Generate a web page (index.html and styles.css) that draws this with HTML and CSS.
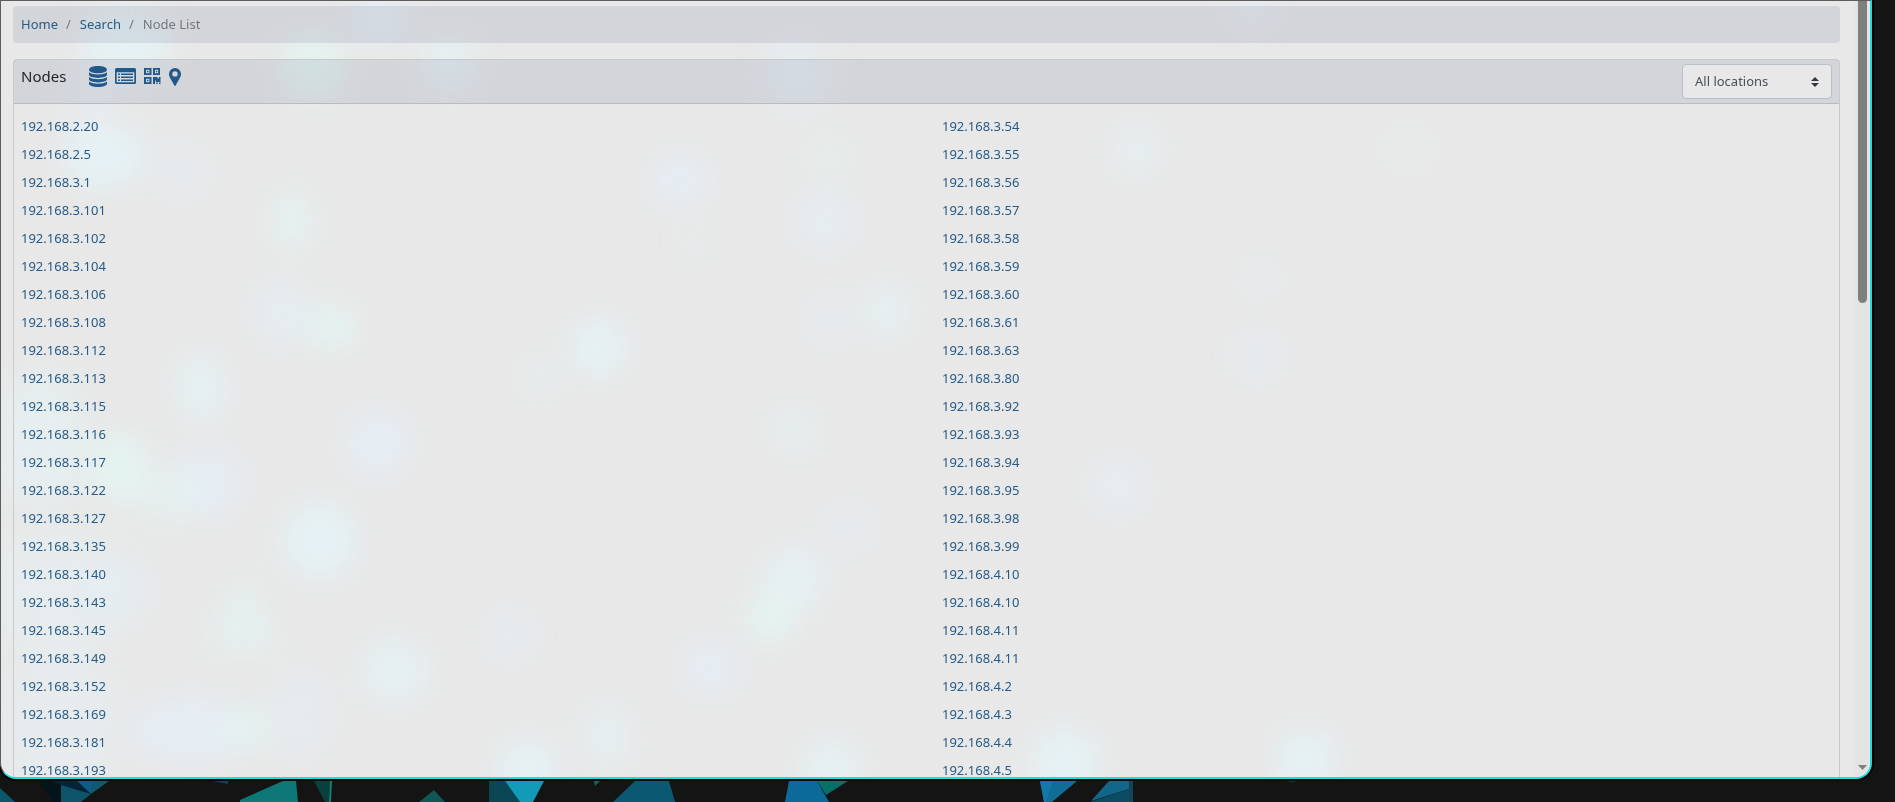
FILE: index.html
```html
<!DOCTYPE html>
<html lang="en">
<head>
<meta charset="utf-8">
<title>Node List</title>
<link rel="stylesheet" href="styles.css">
</head>
<body>
<div class="desktop">
  <div class="window">
    <svg class="glow" viewBox="0 0 1870 777" preserveAspectRatio="none" aria-hidden="true">
      <defs>
        <filter id="soft" x="-5%" y="-5%" width="110%" height="110%" color-interpolation-filters="sRGB"><feGaussianBlur stdDeviation="14"/></filter>
      </defs>
      <g filter="url(#soft)">
        <g fill="#e5f1f4">
          <ellipse cx="124" cy="40" rx="46" ry="36"/><ellipse cx="103" cy="155" rx="42" ry="34"/>
          <circle cx="448" cy="63" r="30" opacity=".8"/><circle cx="597" cy="347" r="29"/>
          <ellipse cx="886" cy="310" rx="22" ry="28" opacity=".8"/><ellipse cx="200" cy="387" rx="26" ry="36" opacity=".8"/>
          <circle cx="539" cy="378" r="20" opacity=".5"/><circle cx="318" cy="540" r="38"/>
          <circle cx="394" cy="671" r="34" opacity=".8"/><circle cx="794" cy="578" r="31" opacity=".9"/>
          <ellipse cx="606" cy="736" rx="25" ry="32" opacity=".7"/><circle cx="527" cy="768" r="31"/>
          <circle cx="830" cy="770" r="32" opacity=".8"/><circle cx="1065" cy="762" r="35"/>
          <circle cx="1305" cy="759" r="30"/><circle cx="1136" cy="149" r="25" opacity=".7"/>
          <circle cx="794" cy="430" r="24" opacity=".6"/><ellipse cx="60" cy="720" rx="60" ry="80" opacity=".4"/>
          <ellipse cx="60" cy="590" rx="80" ry="60" opacity=".5"/><ellipse cx="40" cy="440" rx="45" ry="70" opacity=".6"/>
        </g>
        <g fill="#e5edf3">
          <circle cx="379" cy="18" r="29"/><circle cx="797" cy="73" r="34" opacity=".9"/>
          <circle cx="182" cy="172" r="28" opacity=".5"/><circle cx="679" cy="180" r="27"/>
          <circle cx="824" cy="220" r="30" opacity=".8"/><circle cx="692" cy="245" r="20" opacity=".3"/>
          <ellipse cx="280" cy="312" rx="26" ry="34" opacity=".8"/><circle cx="830" cy="320" r="26" opacity=".5"/>
          <circle cx="376" cy="443" r="33"/><ellipse cx="205" cy="483" rx="36" ry="34"/>
          <circle cx="120" cy="590" r="28" opacity=".8"/><circle cx="509" cy="636" r="26" opacity=".6"/>
          <circle cx="709" cy="668" r="27"/><ellipse cx="190" cy="730" rx="60" ry="32"/>
          <ellipse cx="300" cy="715" rx="32" ry="44" opacity=".6"/><circle cx="90" cy="95" r="26" opacity=".6"/>
          <circle cx="1118" cy="486" r="27" opacity=".9"/><circle cx="1257" cy="356" r="25" opacity=".6"/>
          <circle cx="1259" cy="278" r="22" opacity=".4"/><circle cx="1251" cy="4" r="25" opacity=".7"/>
          <circle cx="848" cy="528" r="26" opacity=".5"/>
        </g>
        <g fill="#e4f3f0">
          <circle cx="312" cy="65" r="33"/><ellipse cx="291" cy="220" rx="23" ry="33" opacity=".8"/>
          <circle cx="331" cy="327" r="24"/><ellipse cx="118" cy="468" rx="31" ry="36"/>
          <ellipse cx="162" cy="500" rx="32" ry="30" opacity=".5"/><path opacity=".8" d="M242 570l40 80h-80z"/>
          <circle cx="770" cy="618" r="26"/><circle cx="248" cy="728" r="22" opacity=".8"/>
          <circle cx="828" cy="157" r="23" opacity=".5"/><circle cx="1408" cy="149" r="25" opacity=".2"/>
        </g>
      </g>
    </svg>

    <main class="content">
      <nav class="breadcrumb" aria-label="Breadcrumb">
        <ol class="crumbs">
          <li class="crumb"><a href="#home">Home</a></li>
          <li class="crumb"><a href="#search">Search</a></li>
          <li class="crumb" aria-current="page">Node List</li>
        </ol>
      </nav>

      <section class="card">
        <header class="card-header">
          <h1 class="card-title">Nodes</h1>
          <div class="tools">
            <a href="#backups" aria-label="Backups"><svg width="18" height="21" viewBox="0 0 18 21"><path d="M0 3.700C0 1.600 4 0 9 0s9 1.600 9 3.700S14 7.200 9 7.200 0 5.800 0 3.700zM0 6.300c2 1.600 5.300 2.200 9 2.200s7-.6 9-2.200v2.500c0 1.700-4 3.100-9 3.100S0 10.500 0 8.800zM0 11c2 1.600 5.300 2.200 9 2.200s7-.6 9-2.200v2.300c0 1.700-4 3.100-9 3.100S0 15 0 13.300zM0 15.500c2 1.600 5.300 2.200 9 2.200s7-.6 9-2.200v2.300C18 19.600 14 21 9 21s-9-1.400-9-3.200z"/></svg></a>
            <a href="#details" aria-label="Details"><svg width="21" height="21" viewBox="0 0 21 21"><path fill-rule="evenodd" d="M1.500 2h18A1.500 1.500 0 0 1 21 3.500v13a1.500 1.500 0 0 1-1.500 1.500h-18A1.500 1.500 0 0 1 0 16.500v-13A1.500 1.500 0 0 1 1.500 2zM1.700 6.300v10h17.600v-10z"/><path d="M3 7.500h2v1.600H3zm3 0h12v1.600H6zM3 10.500h2v1.600H3zm3 0h12v1.600H6zM3 13.500h2v1.600H3zm3 0h12v1.600H6z"/></svg></a>
            <a href="#codes" aria-label="QR codes"><svg width="17" height="21" viewBox="0 0 17 21"><path fill-rule="evenodd" d="M0 2h7.500v7H0zm2 1.800v3.400h3.500V3.800zM9 2h7v7H9zm2 1.800v3.400h3.200V3.800zM0 11h7.500v7H0zm2 1.800v3.400h3.500v-3.400z"/><path d="M3 4.800h1.500v1.500H3zm9 0h1.300v1.500H12zm-9 9h1.500v1.500H3zM9 11h4.500v1.600h1.300V11h1.700v5h-4.800v-1.500H11V18H9zm3.200 5.600h1.500V18h-1.500zm2.800 0h1.500V18H15z"/></svg></a>
            <a href="#map" aria-label="Map"><svg width="12" height="21" viewBox="0 0 12 21"><path fill-rule="evenodd" d="M6 2a6 6 0 0 0-6 6c0 2.500 1 3.600 5.300 11.500.3.600 1.100.6 1.400 0C11 11.600 12 10.500 12 8a6 6 0 0 0-6-6zm0 3.200A2.700 2.700 0 1 1 6 10.600 2.700 2.700 0 0 1 6 5.200z"/></svg></a>
          </div>
          <select class="location" aria-label="Location">
            <option>All locations</option>
          </select>
        </header>

        <div class="nodes">
          <ul class="node-list">
            <li><a href="#n">192.168.2.20</a></li>
            <li><a href="#n">192.168.2.5</a></li>
            <li><a href="#n">192.168.3.1</a></li>
            <li><a href="#n">192.168.3.101</a></li>
            <li><a href="#n">192.168.3.102</a></li>
            <li><a href="#n">192.168.3.104</a></li>
            <li><a href="#n">192.168.3.106</a></li>
            <li><a href="#n">192.168.3.108</a></li>
            <li><a href="#n">192.168.3.112</a></li>
            <li><a href="#n">192.168.3.113</a></li>
            <li><a href="#n">192.168.3.115</a></li>
            <li><a href="#n">192.168.3.116</a></li>
            <li><a href="#n">192.168.3.117</a></li>
            <li><a href="#n">192.168.3.122</a></li>
            <li><a href="#n">192.168.3.127</a></li>
            <li><a href="#n">192.168.3.135</a></li>
            <li><a href="#n">192.168.3.140</a></li>
            <li><a href="#n">192.168.3.143</a></li>
            <li><a href="#n">192.168.3.145</a></li>
            <li><a href="#n">192.168.3.149</a></li>
            <li><a href="#n">192.168.3.152</a></li>
            <li><a href="#n">192.168.3.169</a></li>
            <li><a href="#n">192.168.3.181</a></li>
            <li><a href="#n">192.168.3.193</a></li>
          </ul>
          <ul class="node-list">
            <li><a href="#n">192.168.3.54</a></li>
            <li><a href="#n">192.168.3.55</a></li>
            <li><a href="#n">192.168.3.56</a></li>
            <li><a href="#n">192.168.3.57</a></li>
            <li><a href="#n">192.168.3.58</a></li>
            <li><a href="#n">192.168.3.59</a></li>
            <li><a href="#n">192.168.3.60</a></li>
            <li><a href="#n">192.168.3.61</a></li>
            <li><a href="#n">192.168.3.63</a></li>
            <li><a href="#n">192.168.3.80</a></li>
            <li><a href="#n">192.168.3.92</a></li>
            <li><a href="#n">192.168.3.93</a></li>
            <li><a href="#n">192.168.3.94</a></li>
            <li><a href="#n">192.168.3.95</a></li>
            <li><a href="#n">192.168.3.98</a></li>
            <li><a href="#n">192.168.3.99</a></li>
            <li><a href="#n">192.168.4.10</a></li>
            <li><a href="#n">192.168.4.10</a></li>
            <li><a href="#n">192.168.4.11</a></li>
            <li><a href="#n">192.168.4.11</a></li>
            <li><a href="#n">192.168.4.2</a></li>
            <li><a href="#n">192.168.4.3</a></li>
            <li><a href="#n">192.168.4.4</a></li>
            <li><a href="#n">192.168.4.5</a></li>
          </ul>
        </div>
      </section>
    </main>

    <div class="scrollbar" aria-hidden="true">
      <div class="scroll-thumb"></div>
      <svg width="9" height="5" viewBox="0 0 9 5"><path fill="#7f7f7f" d="M0 0h9L4.500 5z"/></svg>
    </div>
  </div>

  <div class="wallpaper" aria-hidden="true">
    <svg width="1895" height="21" viewBox="0 0 1895 21">
      <path fill="#0b566b" d="M0 7l15 14H0z"/>
      <path fill="#03141a" d="M38 0h14l9 4v17h-7z"/>
      <path fill="#03233a" d="M52 0h25l14 13-30-9z"/>
      <path fill="#0c5569" d="M61 4l30 9-10 8H61z"/>
      <path fill="#105a86" d="M77 0h14v13z"/>
      <path fill="#0b5a70" d="M91 0h18L91 13z"/>
      <path fill="#0a4264" d="M212 0h16v3z"/>
      <path fill="#0e7878" d="M283 0h13l2 21h-58v-2z"/>
      <path fill="#07403c" d="M314 0h16l-1 21h-4z"/>
      <path fill="#188070" d="M330 0h2l-1 21h-2z"/>
      <path fill="#0f5654" d="M434 9l11 12h-26z"/>
      <path fill="#0a4654" d="M489 0h16l15 21h-31z"/>
      <path fill="#139ab6" d="M505 0h39l-11 21h-13z"/>
      <path fill="#0d665f" d="M594 0h6l-5 5z"/>
      <path fill="#0b5872" d="M635 0h34l6 21h-62z"/>
      <path fill="#0c6a9a" d="M789 0h28l12 21h-44z"/>
      <path fill="#087068" d="M817 0h31l-22 14z"/>
      <path fill="#106d95" d="M1040 0h37l-25 21h-8z"/>
      <path fill="#1178a8" d="M1040 0h13l-7 21h-2z"/>
      <path fill="#11668a" d="M1109 0h20v8l-38 12z"/>
      <path fill="#0b4c63" d="M1129 8v13h-39z"/>
      <path fill="#164358" d="M1129 0h4v21h-4z"/>
      <path fill="#0a3040" d="M1288 0h8l-5 2z"/>
    </svg>
  </div>
</div>
</body>
</html>
```

FILE: styles.css
```css
* {
  box-sizing: border-box;
}

body {
  margin: 0;
  background: #141414;
  color: #212529;
  font: 13px/21px "Noto Sans", "Open Sans", sans-serif;
}

a {
  color: #265b88;
  text-decoration: none;
}

.desktop {
  display: grid;
  grid-template-rows: minmax(0, 1fr) 21px;
  row-gap: 2px;
  height: 100vh;
  overflow: hidden;
}

.window {
  position: relative;
  display: flex;
  margin-right: 23px;
  overflow: hidden;
  border: solid #19dfe0;
  border-width: 1px 2px 2px 1px;
  border-top-color: #5f5c60;
  border-left-color: #5f5c60;
  border-radius: 0 0 16px 16px;
  background: #e8e8e8;
  box-shadow: 0 0 0 2px #000;
}

.glow {
  position: absolute;
  inset: 0;
  width: 100%;
  height: 100%;
}

.content {
  position: relative;
  flex: 1;
  min-width: 0;
  padding: 5px 15px 0 12px;
}

.breadcrumb {
  margin-bottom: 16px;
  padding: 8px;
  border-radius: 4px;
  background: rgba(100, 107, 133, .15);
}

.crumbs {
  display: flex;
  margin: 0;
  padding: 0;
  list-style: none;
}

.crumb {
  color: #74797e;
}

.crumb + .crumb::before {
  content: "/";
  padding: 0 9px 0 8px;
}

.card {
  border: 1px solid #c8c9cb;
  border-radius: 4px;
}

.card-header {
  display: flex;
  align-items: flex-start;
  padding: 4px 7px;
  border-bottom: 1px solid #babbc1;
  background: rgba(100, 107, 133, .15);
}

.card-title {
  margin: 0 23px 0 0;
  font-size: 15px;
  font-weight: 400;
  line-height: 25px;
}

.tools {
  display: flex;
  gap: 8px;
  padding-top: 2px;
}

.tools svg {
  display: block;
  fill: #23588a;
}

.location {
  width: 150px;
  height: 35px;
  margin-left: auto;
  padding: 0 12px;
  appearance: none;
  border: 1px solid #b9bfc8;
  border-radius: 4px;
  background: #e8e8e8 url("data:image/svg+xml,%3Csvg xmlns='http://www.w3.org/2000/svg' viewBox='0 0 4 5'%3E%3Cpath fill='%23343a40' d='M2 0L0 2h4zm0 5L0 3h4z'/%3E%3C/svg%3E") no-repeat right 12px center / 8px 10px;
  color: #495057;
  font: inherit;
}

.nodes {
  display: grid;
  grid-template-columns: 1fr 1fr;
  column-gap: 31px;
  padding: 8px 7px;
}

.node-list {
  margin: 0;
  padding: 0;
  list-style: none;
  line-height: 28px;
}

.scrollbar {
  position: relative;
  display: flex;
  flex-direction: column;
  justify-content: space-between;
  width: 15px;
  padding: 0 3px 7px;
  background: #e4e4e4;
}

.scroll-thumb {
  height: 39.3%;
  border-radius: 0 0 5px 5px;
  background: #7f7f7f;
}

.wallpaper {
  overflow: hidden;
}

.wallpaper svg {
  display: block;
}
```
